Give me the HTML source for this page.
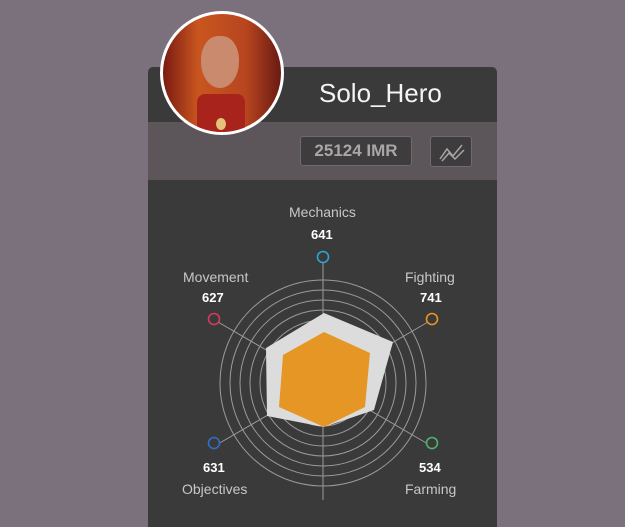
<!DOCTYPE html>
<html><head><style>
html,body{margin:0;padding:0;}
body{width:625px;height:500px;background:#7b717c;position:relative;overflow:hidden;font-family:"Liberation Sans",sans-serif;}
.card{position:absolute;left:148px;top:67px;width:349px;height:460px;background:#3b3a3b;border-radius:5px 5px 0 0;overflow:hidden;}
.band{position:absolute;left:0;top:55px;width:349px;height:58px;background:#5c5559;}
.name{position:absolute;left:319px;top:78px;font-size:26px;color:#f4f4f4;}
.imr{position:absolute;left:300px;top:136px;width:112px;height:30px;box-sizing:border-box;border:1px solid #6f6a6d;border-radius:3px;background:#3f3c3e;color:#a9a6a8;font-size:17px;font-weight:bold;text-align:center;line-height:28px;}
.btn{position:absolute;left:430px;top:136px;width:42px;height:31px;box-sizing:border-box;border:1px solid #6f6a6d;border-radius:3px;background:#3f3c3e;}
.av{position:absolute;left:160px;top:11px;width:118px;height:118px;border-radius:50%;border:3px solid #fff;background:linear-gradient(90deg,#7a1a12,#c9561f 30%,#b8451f 70%,#6a1a12);overflow:hidden;}
.lbl{position:absolute;color:#c9c6c8;font-size:14px;}
.num{position:absolute;color:#fff;font-size:13px;font-weight:bold;}
</style></head><body>
<div class="card"><div class="band"></div></div>
<div class="av">
<div style="position:absolute;left:38px;top:22px;width:38px;height:52px;background:#c98a6e;border-radius:45% 45% 50% 50%;"></div>
<div style="position:absolute;left:34px;top:80px;width:48px;height:40px;background:#a8231b;border-radius:8px 8px 0 0;"></div>
<div style="position:absolute;left:53px;top:104px;width:10px;height:12px;background:#e5c27a;border-radius:50%;"></div>
</div>
<div class="name">Solo_Hero</div>
<div class="imr">25124 IMR</div>
<div class="btn"><svg width="42" height="31" viewBox="0 0 42 31"><path d="M9 22 L16 12 L22 19 L31 8 M11 24 L18 16 L24 22 L33 13" stroke="#a9a6a8" stroke-width="1.5" fill="none"/></svg></div>
<svg style="position:absolute;left:0;top:0" width="625" height="500">
<g fill="none" stroke="#9c9a9b" stroke-width="1">
<circle cx="323" cy="383" r="103"/><circle cx="323" cy="383" r="93"/><circle cx="323" cy="383" r="83"/><circle cx="323" cy="383" r="73"/><circle cx="323" cy="383" r="63"/><circle cx="323" cy="383" r="53"/><circle cx="323" cy="383" r="43"/>
<path d="M323 262 V500 M218 322 L428 444 M428 322 L218 444"/>
</g>
<polygon points="324,313 393,342 374,410 324,427 267,416 266,348" fill="#dcdcdc"/>
<polygon points="324,332 370,353 365,407 324,427 279,407 283,355" fill="#e69624"/>
<g fill="#3b3a3b" stroke-width="1.6">
<circle cx="323" cy="257" r="5.5" stroke="#2aa7d6"/>
<circle cx="432" cy="319" r="5.5" stroke="#e69624"/>
<circle cx="432" cy="443" r="5.5" stroke="#4cb56b"/>
<circle cx="214" cy="443" r="5.5" stroke="#2e6fc4"/>
<circle cx="214" cy="319" r="5.5" stroke="#d53a5f"/>
</g>
</svg>
<div class="lbl" style="left:289px;top:204px">Mechanics</div>
<div class="num" style="left:311px;top:227px">641</div>
<div class="lbl" style="left:183px;top:269px">Movement</div>
<div class="num" style="left:202px;top:290px">627</div>
<div class="lbl" style="left:405px;top:269px">Fighting</div>
<div class="num" style="left:420px;top:290px">741</div>
<div class="num" style="left:203px;top:460px">631</div>
<div class="lbl" style="left:182px;top:481px">Objectives</div>
<div class="num" style="left:419px;top:460px">534</div>
<div class="lbl" style="left:405px;top:481px">Farming</div>
</body></html>
